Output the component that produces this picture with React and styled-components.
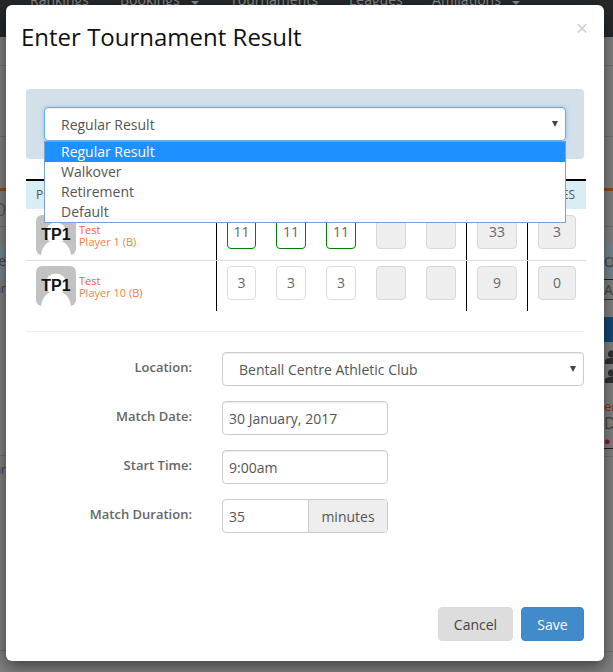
import React from "react";
import styled, { createGlobalStyle } from "styled-components";

const GlobalStyle = createGlobalStyle`
  html, body {
    margin: 0;
    padding: 0;
    height: 672px;
    overflow: hidden;
    background: #808080;
    font-family: "Open Sans", "Liberation Sans", sans-serif;
  }
  * { box-sizing: border-box; }
`;

/* ---------- page behind the dialog ---------- */
const Page = styled.div`
  position: relative;
  width: 613px;
  height: 672px;
  overflow: hidden;
  background: #7f7f7f;
`;

const TopNav = styled.div`
  height: 37px;
  background: #25292c;
  display: flex;
  align-items: flex-end;
  padding-left: 30px;
  overflow: hidden;
`;

const NavItem = styled.span`
  display: flex;
  align-items: center;
  font-size: 14px;
  line-height: 14px;
  color: #8a8a8a;
  white-space: nowrap;
  width: ${(p) => p.$w}px;
  flex: none;
  margin-bottom: 30px;
`;

const NavCaret = styled.i`
  margin: 6px 0 0 11px;
  border-left: 4px solid transparent;
  border-right: 4px solid transparent;
  border-top: 4px solid #8a8a8a;
`;

const Sides = styled.div`
  display: flex;
  justify-content: space-between;
  height: 635px;
`;

const SideColumn = styled.div`
  width: ${(p) => p.$w}px;
  display: flex;
  flex-direction: column;
  overflow: hidden;
`;

const Strip = styled.div`
  height: ${(p) => p.$h}px;
  flex: none;
  background: ${(p) => p.$bg || "transparent"};
  border-bottom: ${(p) => (p.$line ? `1px solid ${p.$line}` : "none")};
  font-size: ${(p) => p.$size || 13}px;
  line-height: ${(p) => p.$h}px;
  color: ${(p) => p.$color || "#444"};
  white-space: nowrap;
  display: flex;
  justify-content: ${(p) => (p.$end ? "flex-end" : "flex-start")};
  align-items: center;
`;

const PersonGlyph = styled.svg`
  width: 13px;
  height: 14px;
  margin-left: 1px;
  flex: none;
`;

const Person = () => (
  <PersonGlyph viewBox="0 0 13 14">
    <circle cx="6.5" cy="4" r="3.6" fill="#2d2f33" />
    <path d="M0 14 V11 Q0 8 6.5 8 Q13 8 13 11 V14 Z" fill="#2d2f33" />
  </PersonGlyph>
);

const Backdrop = styled.div`
  position: absolute;
  inset: 0;
`;

/* ---------- dialog ---------- */
const Modal = styled.div`
  position: absolute;
  left: 6px;
  top: 5px;
  width: 598px;
  height: 656px;
  background: #fff;
  border-radius: 6px;
  box-shadow: 0 5px 15px rgba(0, 0, 0, 0.5);
  padding: 0 20px 20px;
  display: flex;
  flex-direction: column;
  color: #555;
`;

const Header = styled.div`
  height: 84px;
  margin: 0 -5px;
  display: flex;
  justify-content: space-between;
  align-items: flex-start;
`;

const Title = styled.h4`
  margin: 15px 0 0;
  font-size: 24px;
  line-height: 33px;
  font-weight: 400;
  color: #111;
`;

const Close = styled.span`
  margin: 11px 1px 0 0;
  font-size: 21px;
  line-height: 24px;
  font-weight: 400;
  color: #cfcfcf;
`;

const ResultPanel = styled.div`
  position: relative;
  height: 70px;
  width: 558px;
  padding: 18px;
  background: #d3e0ea;
  border-radius: 4px;
`;

const Select = styled.div`
  position: relative;
  height: 34px;
  width: ${(p) => p.$width || "522px"};
  padding-left: 16px;
  background: #fff;
  border: 1px solid ${(p) => (p.$focus ? "#66afe9" : "#ccc")};
  border-radius: 4px;
  box-shadow: ${(p) =>
    p.$focus
      ? "inset 0 1px 1px rgba(0,0,0,.075), 0 0 4px rgba(102,175,233,.6)"
      : "inset 0 1px 1px rgba(0,0,0,.075)"};
  font-size: 14px;
  line-height: 33px;
  color: #555;
  &::after {
    content: "";
    position: absolute;
    right: 7px;
    top: 13px;
    border-left: 3px solid transparent;
    border-right: 3px solid transparent;
    border-top: 6px solid #444;
  }
`;

const OptionList = styled.div`
  position: absolute;
  left: 18px;
  top: 52px;
  width: 522px;
  height: 82px;
  background: #fff;
  border: 1px solid #7a9fdc;
  z-index: 2;
`;

const Option = styled.div`
  height: 20px;
  padding-left: 16px;
  font-size: 14px;
  line-height: 20px;
  color: ${(p) => (p.$active ? "#fff" : "#555")};
  background: ${(p) => (p.$active ? "#1e90ff" : "#fff")};
`;

const ScoreTable = styled.div`
  width: 560px;
  margin-top: 20px;
  border-top: 2px solid #000;
`;

const TableHead = styled.div`
  height: 28px;
  background: #d9edf7;
  padding: 0 11px 0 10px;
  display: flex;
  justify-content: space-between;
  font-size: 12px;
  line-height: 28px;
  color: #555;
`;

const Row = styled.div`
  display: grid;
  grid-template-columns: 191px 250px 61px 58px;
  height: ${(p) => p.$h}px;
  border-bottom: ${(p) => (p.$last ? "none" : "1px solid #ddd")};
`;

const PlayerCell = styled.div`
  border-right: 1px solid #000;
  padding: ${(p) => p.$top}px 0 0 10px;
  display: flex;
  align-items: flex-start;
`;

const Avatar = styled.div`
  position: relative;
  width: 40px;
  height: 40px;
  flex: none;
  svg {
    display: block;
  }
`;

const AvatarText = styled.span`
  position: absolute;
  left: 0;
  right: 0;
  top: 11px;
  text-align: center;
  font-family: "Liberation Sans", Arial, sans-serif;
  font-size: 16px;
  line-height: 18px;
  font-weight: 700;
  color: #111;
`;

const PlayerName = styled.div`
  margin: 9px 0 0 3px;
  font-size: 11px;
  line-height: 12px;
`;

const FirstName = styled.div`
  color: #ff5a45;
`;

const LastName = styled.div`
  color: #fb7d43;
`;

const ScoreCell = styled.div`
  border-right: ${(p) => (p.$noLine ? "none" : "1px solid #000")};
  padding: ${(p) => p.$top}px 0 0 ${(p) => p.$left}px;
  display: flex;
  gap: 20px;
  align-items: flex-start;
`;

const ScoreBox = styled.div`
  width: ${(p) => p.$w || 30}px;
  height: 34px;
  flex: none;
  border: 1px solid ${(p) => (p.$win ? "#008000" : p.$off ? "#d8d8d8" : "#ddd")};
  border-radius: 4px;
  background: ${(p) => (p.$off ? "#eee" : "#fff")};
  font-size: 14px;
  line-height: 32px;
  text-align: center;
  color: #666;
  &:first-child {
    width: ${(p) => p.$w || 29}px;
  }
`;

const Divider = styled.div`
  width: 558px;
  height: 1px;
  margin: 20px 0 20px;
  background: #eee;
`;

const FormRow = styled.div`
  display: flex;
  align-items: flex-start;
  margin-bottom: 15px;
`;

const Label = styled.label`
  width: 166px;
  margin-right: 30px;
  text-align: right;
  font-size: 13px;
  line-height: 30px;
  font-weight: 600;
  color: #666;
`;

const TextField = styled.div`
  width: 166px;
  height: 34px;
  padding-left: 6px;
  border: 1px solid #ccc;
  border-radius: 4px;
  box-shadow: inset 0 1px 1px rgba(0, 0, 0, 0.075);
  font-size: 14px;
  line-height: 33px;
  color: #555;
`;

const InputGroup = styled.div`
  width: 166px;
  height: 34px;
  display: flex;
  border: 1px solid #ccc;
  border-radius: 4px;
  overflow: hidden;
  font-size: 14px;
  line-height: 33px;
  color: #555;
`;

const GroupValue = styled.div`
  width: 86px;
  padding-left: 6px;
  border-right: 1px solid #ccc;
`;

const GroupAddon = styled.div`
  flex: 1;
  background: #eee;
  text-align: center;
`;

const Footer = styled.div`
  margin-top: auto;
  width: 558px;
  display: flex;
  justify-content: flex-end;
  gap: 8px;
`;

const Button = styled.button`
  height: 34px;
  width: ${(p) => p.$w}px;
  padding: 0;
  font-family: inherit;
  font-size: 14px;
  border-radius: 4px;
  border: 1px solid ${(p) => (p.$primary ? "#3f86c6" : "#ddd")};
  background: ${(p) => (p.$primary ? "#428bca" : "#ddd")};
  color: ${(p) => (p.$primary ? "#fff" : "#444")};
`;

const leftStrips = [
  { h: 29, line: "#6f6f6f" },
  { h: 71, line: "#6f6f6f" },
  { h: 51 },
  { h: 3, bg: "#8a4a20" },
  { h: 36, line: "#6f6f6f", text: "0", size: 18, color: "#555" },
  { h: 16 },
  { h: 36, bg: "#75858d", text: "e", size: 14 },
  { h: 20, text: "ar", size: 12, color: "#4a3a55" },
  { h: 157, line: "#6f6f6f" },
  { h: 27, text: "ar", size: 12, color: "#4a3a55" },
  { h: 168, line: "#6f6f6f" },
];

const rightStrips = [
  { h: 29, line: "#6f6f6f" },
  { h: 71, line: "#6f6f6f" },
  { h: 51 },
  { h: 3, bg: "#8a4a20" },
  { h: 36, line: "#6f6f6f" },
  { h: 16 },
  { h: 37, bg: "#75858d", line: "#222", text: "OU", size: 14 },
  { h: 20, text: "A3", size: 14, line: "#333" },
  { h: 17 },
  { h: 25, bg: "#15466f" },
  { h: 5 },
  { h: 19, person: true },
  { h: 19, person: true },
  { h: 13 },
  { h: 16, text: "er", size: 13, color: "#8a2a20" },
  { h: 18, text: "D", size: 16, color: "#444" },
  { h: 17, text: "● O", size: 11, color: "#8a1040", line: "#222" },
  { h: 8, line: "#6f6f6f" },
  { h: 195, line: "#6f6f6f" },
];

const GAMES = [
  { name: "Player 1 (B)", top: 6, scores: ["11", "11", "11"], win: true, total: "33", games: "3", h: 52 },
  { name: "Player 10 (B)", top: 5, scores: ["3", "3", "3"], win: false, total: "9", games: "0", h: 50, last: true },
];

const PlayerRow = ({ row }) => (
  <Row $h={row.h} $last={row.last}>
    <PlayerCell $top={row.top}>
      <Avatar>
        <svg width="40" height="40" viewBox="0 0 40 40">
          <rect width="40" height="40" rx="6" fill="#c2c2c2" />
          <circle cx="20" cy="18" r="10.5" fill="#fff" />
          <path d="M5 40 Q7 26 20 25 Q33 26 35 40 Z" fill="#fff" />
        </svg>
        <AvatarText>TP1</AvatarText>
      </Avatar>
      <PlayerName>
        <FirstName>Test</FirstName>
        <LastName>{row.name}</LastName>
      </PlayerName>
    </PlayerCell>
    <ScoreCell $top={row.top} $left={10}>
      {row.scores.map((s, i) => (
        <ScoreBox key={i} $win={row.win}>
          {s}
        </ScoreBox>
      ))}
      <ScoreBox $off />
      <ScoreBox $off />
    </ScoreCell>
    <ScoreCell $top={row.top} $left={10}>
      <ScoreBox $off $w={40}>
        {row.total}
      </ScoreBox>
    </ScoreCell>
    <ScoreCell $top={row.top} $left={10} $noLine>
      <ScoreBox $off $w={38}>
        {row.games}
      </ScoreBox>
    </ScoreCell>
  </Row>
);

export default function App() {
  return (
    <>
      <GlobalStyle />
      <Page>
        <Backdrop>
          <TopNav>
            <NavItem $w={90}>Rankings</NavItem>
            <NavItem $w={110}>
              Bookings
              <NavCaret />
            </NavItem>
            <NavItem $w={119}>Tournaments</NavItem>
            <NavItem $w={83}>Leagues</NavItem>
            <NavItem $w={100}>
              Affiliations
              <NavCaret />
            </NavItem>
          </TopNav>
          <Sides>
            <SideColumn $w={6}>
              {leftStrips.map((s, i) => (
                <Strip key={i} $h={s.h} $bg={s.bg} $line={s.line} $size={s.size} $color={s.color} $end>
                  {s.text}
                </Strip>
              ))}
            </SideColumn>
            <SideColumn $w={9}>
              {rightStrips.map((s, i) => (
                <Strip key={i} $h={s.h} $bg={s.bg} $line={s.line} $size={s.size} $color={s.color}>
                  {s.person ? <Person /> : s.text}
                </Strip>
              ))}
            </SideColumn>
          </Sides>
        </Backdrop>

        <Modal>
          <Header>
            <Title>Enter Tournament Result</Title>
            <Close>×</Close>
          </Header>

          <ResultPanel>
            <Select $focus>Regular Result</Select>
            <OptionList>
              <Option $active>Regular Result</Option>
              <Option>Walkover</Option>
              <Option>Retirement</Option>
              <Option>Default</Option>
            </OptionList>
          </ResultPanel>

          <ScoreTable>
            <TableHead>
              <span>PLAYERS</span>
              <span>GAMES</span>
            </TableHead>
            {GAMES.map((row) => (
              <PlayerRow key={row.name} row={row} />
            ))}
          </ScoreTable>

          <Divider />

          <FormRow>
            <Label>Location:</Label>
            <Select $width="362px">Bentall Centre Athletic Club</Select>
          </FormRow>
          <FormRow>
            <Label>Match Date:</Label>
            <TextField>30 January, 2017</TextField>
          </FormRow>
          <FormRow>
            <Label>Start Time:</Label>
            <TextField>9:00am</TextField>
          </FormRow>
          <FormRow>
            <Label>Match Duration:</Label>
            <InputGroup>
              <GroupValue>35</GroupValue>
              <GroupAddon>minutes</GroupAddon>
            </InputGroup>
          </FormRow>

          <Footer>
            <Button $w={75}>Cancel</Button>
            <Button $w={63} $primary>
              Save
            </Button>
          </Footer>
        </Modal>
      </Page>
    </>
  );
}
